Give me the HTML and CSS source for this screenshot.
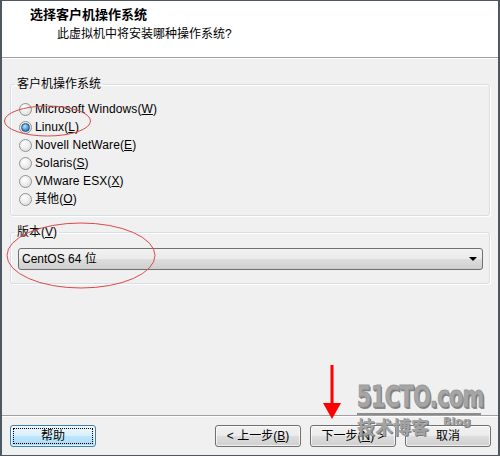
FILE: index.html
```html
<!DOCTYPE html>
<html lang="zh-CN">
<head>
<meta charset="utf-8">
<title>新建虚拟机向导</title>
<link rel="stylesheet" href="styles.css">
</head>
<body>
<div class="window">
  <header class="header">
    <div class="title">选择客户机操作系统</div>
    <div class="subtitle">此虚拟机中将安装哪种操作系统?</div>
  </header>
  <main class="content">
    <fieldset class="group">
      <legend>客户机操作系统</legend>
      <div class="radios">
        <label class="radio"><span class="dot"></span><span class="radio-text">Microsoft Windows(<u>W</u>)</span></label>
        <label class="radio"><span class="dot checked"></span><span class="radio-text">Linux(<u>L</u>)</span></label>
        <label class="radio"><span class="dot"></span><span class="radio-text">Novell NetWare(<u>E</u>)</span></label>
        <label class="radio"><span class="dot"></span><span class="radio-text">Solaris(<u>S</u>)</span></label>
        <label class="radio"><span class="dot"></span><span class="radio-text">VMware ESX(<u>X</u>)</span></label>
        <label class="radio"><span class="dot"></span><span class="radio-text">其他(<u>O</u>)</span></label>
      </div>
    </fieldset>
    <fieldset class="group group-version">
      <legend>版本(<u>V</u>)</legend>
      <div class="version">
        <div class="select"><span class="select-text">CentOS 64 位</span><span class="arrow"></span></div>
      </div>
    </fieldset>
  </main>
  <footer class="footer">
    <button class="btn btn-focus"><span class="btn-label">帮助</span></button>
    <div class="nav">
      <button class="btn"><span class="btn-label">&lt; 上一步(<u>B</u>)</span></button>
      <button class="btn"><span class="btn-label">下一步(<u>N</u>) &gt;</span></button>
      <button class="btn"><span class="btn-label">取消</span></button>
    </div>
  </footer>

  <div class="watermark">
    <div class="wm-main">51CTO.com</div>
    <div class="wm-rule"></div>
    <div class="wm-sub"><span class="wm-cn">技术博客</span><span class="wm-blog">Blog</span></div>
  </div>

  <svg class="annot" width="500" height="456" viewBox="0 0 500 456">
    <ellipse cx="47.5" cy="121" rx="43" ry="15" fill="none" stroke="#d94a4a" stroke-width="1"/>
    <ellipse cx="81" cy="255.5" rx="74" ry="32.5" fill="none" stroke="#d94a4a" stroke-width="1"/>
    <rect x="330.5" y="365" width="3" height="39" fill="#ff0000"/>
    <polygon points="323,403 341,403 332,419" fill="#ff0000"/>
  </svg>
</div>
</body>
</html>
```

FILE: styles.css
```css
* { box-sizing: border-box; }

html, body {
  margin: 0;
  padding: 0;
}

body {
  font-family: "Liberation Sans", "Noto Sans CJK SC", sans-serif;
  font-size: 12px;
  color: #000;
  background: #f0f0f0;
}

.window {
  position: relative;
  width: 500px;
  height: 456px;
  display: flex;
  flex-direction: column;
  border-top: 1px solid #4d5863;
  border-bottom: 1px solid #4d5863;
  border-left: 2px solid #4d5863;
  border-right: 2px solid #4d5863;
  background: #f0f0f0;
  overflow: hidden;
}

.header {
  height: 57px;
  flex: none;
  background: #fff;
  border-bottom: 1px solid #a0a0a0;
  padding: 6px 0 0 28px;
}

.title {
  font-weight: bold;
  font-size: 13px;
  line-height: 16px;
}

.subtitle {
  margin: 3px 0 0 27px;
  line-height: 16px;
}

.content {
  flex: 1;
  padding: 19px 8px 0 8px;
  box-shadow: inset 0 1px 0 #fff;
}

.group {
  margin: 0;
  padding: 0;
  min-width: 0;
  border: 1px solid #d5dfe5;
  border-radius: 3px;
  box-shadow: inset 1px 1px 0 #fff, 1px 1px 0 #fff;
}

.group legend {
  margin-left: 4px;
  padding: 0 2px;
  line-height: 14px;
}

.group-version {
  margin-top: 9px;
}

.radios {
  padding: 9px 0 7px 8px;
  display: flex;
  flex-direction: column;
}

.radio {
  height: 18px;
  display: flex;
  align-items: center;
  gap: 3px;
}

.radio-text {
  line-height: 18px;
  white-space: nowrap;
  letter-spacing: 0.1px;
}

.dot {
  width: 13px;
  height: 13px;
  border-radius: 50%;
  border: 1px solid #8f9396;
  background: radial-gradient(circle at 40% 35%, #ffffff 0%, #f0f0f0 40%, #cfd2d4 100%);
  display: flex;
  align-items: center;
  justify-content: center;
  flex: none;
}

.dot.checked::after {
  content: "";
  width: 7px;
  height: 7px;
  border-radius: 50%;
  border: 1px solid #1f4f7a;
  background: radial-gradient(circle at 40% 35%, #b7e3ff 0%, #4a9ad6 55%, #1b5d96 100%);
}

.version {
  padding: 9px 6px 13px 7px;
}

.select {
  height: 22px;
  border: 1px solid #707070;
  border-radius: 3px;
  background: linear-gradient(#f2f2f2 0%, #ebebeb 48%, #dddddd 52%, #cfcfcf 100%);
  display: flex;
  align-items: center;
  justify-content: space-between;
  padding: 0 5px 0 3px;
}

.select-text {
  line-height: 18px;
}

.arrow {
  width: 0;
  height: 0;
  border-left: 4px solid transparent;
  border-right: 4px solid transparent;
  border-top: 4px solid #000;
}

.footer {
  height: 40px;
  flex: none;
  border-top: 1px solid #a0a0a0;
  box-shadow: inset 0 1px 0 #fff;
  padding: 9px 7px 0 8px;
  display: flex;
  justify-content: space-between;
  align-items: flex-start;
}

.nav {
  display: flex;
  gap: 9px;
}

.btn {
  position: relative;
  width: 86px;
  height: 22px;
  padding: 0;
  margin: 0;
  border: 1px solid #707070;
  border-radius: 3px;
  background: linear-gradient(#f2f2f2 0%, #ebebeb 48%, #dddddd 52%, #cfcfcf 100%);
  font-family: inherit;
  font-size: 12px;
  color: #000;
  box-shadow: inset 0 0 0 1px rgba(255,255,255,0.7);
}

.btn-label {
  line-height: 18px;
}

.btn-focus {
  border-color: #3c7fb1;
  background: linear-gradient(#eaf6fd 0%, #d9f0fc 48%, #bee6fd 52%, #a7d9f5 100%);
}

.btn-focus::after {
  content: "";
  position: absolute;
  inset: 2px;
  border: 1px dotted #000;
}

.watermark {
  position: absolute;
  left: 355px;
  top: 381px;
  width: 130px;
  color: #9a9a9a;
  pointer-events: none;
}

.wm-main {
  font-family: "DejaVu Sans", sans-serif;
  font-weight: bold;
  font-size: 30px;
  line-height: 30px;
  letter-spacing: -1px;
  transform: scaleX(0.7);
  transform-origin: left center;
  white-space: nowrap;
  color: #a6a6a6;
  -webkit-text-stroke: 1px #9a9a9a;
  text-shadow: 1px 1px 0 #6e6e6e, 2px 2px 0 #8a8a8a;
}

.wm-rule {
  margin-top: 1px;
  width: 124px;
  height: 2px;
  background: #8c8c8c;
}

.wm-sub {
  display: flex;
  align-items: flex-start;
  gap: 14px;
  margin-top: 0;
}

.wm-cn {
  font-family: "Noto Sans CJK SC", sans-serif;
  font-weight: bold;
  font-size: 18px;
  line-height: 22px;
  color: #a3a3a3;
  text-shadow: 1px 1px 0 #7a7a7a;
}

.wm-blog {
  font-family: "DejaVu Sans", sans-serif;
  font-weight: bold;
  font-size: 11px;
  line-height: 12px;
  margin-top: 1px;
  color: #a3a3a3;
  text-shadow: 1px 1px 0 #7a7a7a;
}

.annot {
  position: absolute;
  left: -2px;
  top: -1px;
  pointer-events: none;
}
```
